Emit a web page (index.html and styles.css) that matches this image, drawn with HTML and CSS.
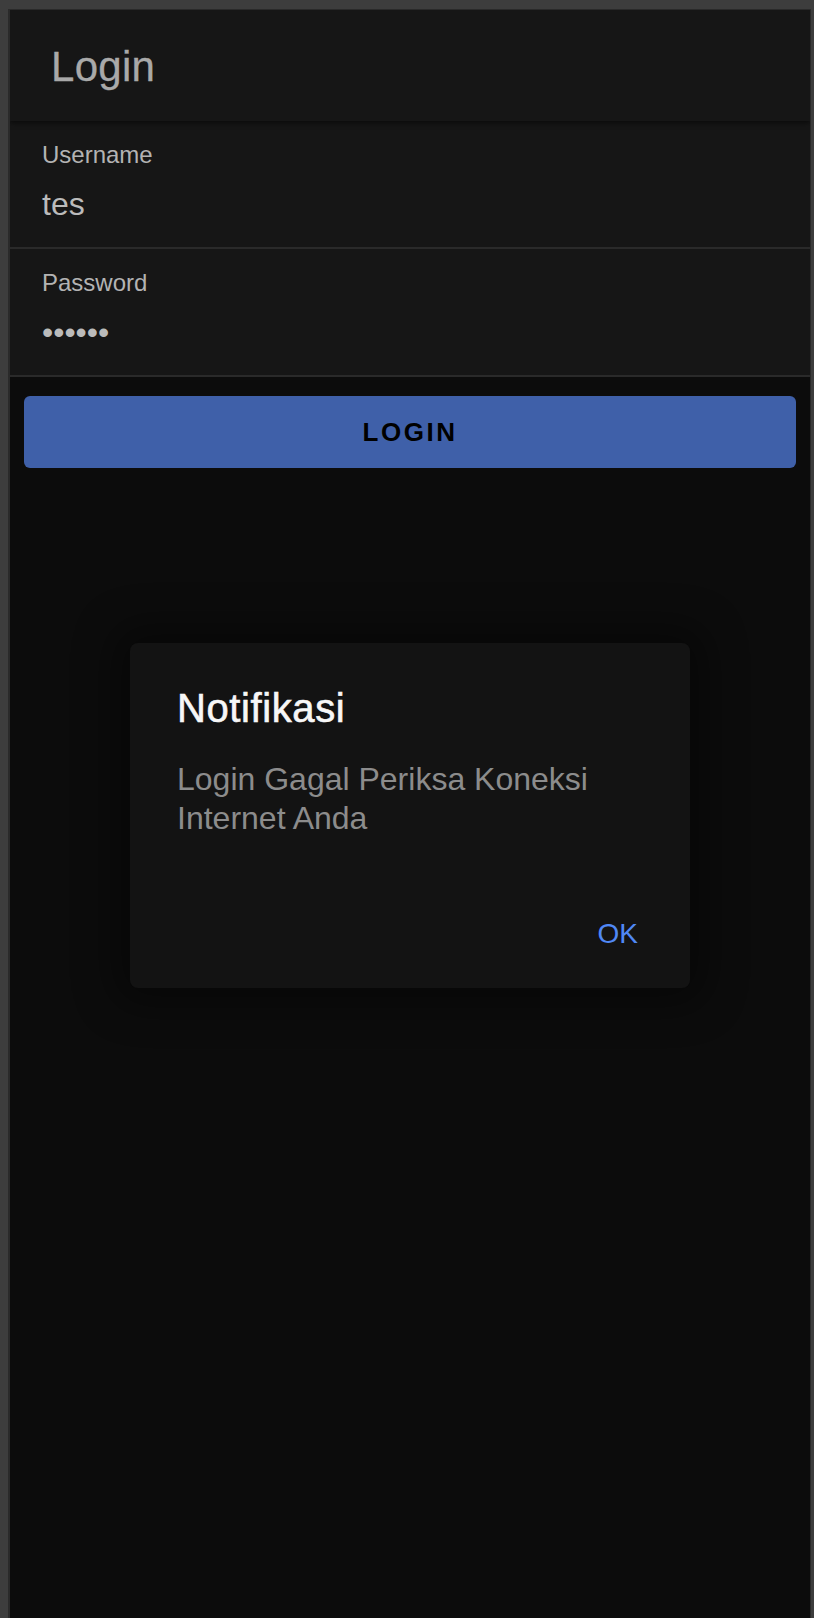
FILE: index.html
```html
<!DOCTYPE html>
<html lang="id">
<head>
<meta charset="utf-8">
<title>Login</title>
<link rel="stylesheet" href="styles.css">
</head>
<body>
<div class="app">
  <header class="toolbar">
    <h1 class="toolbar-title">Login</h1>
  </header>
  <main class="content">
    <div class="field">
      <div class="field-label">Username</div>
      <div class="field-value">tes</div>
    </div>
    <div class="field">
      <div class="field-label">Password</div>
      <div class="field-value">••••••</div>
    </div>
    <button class="btn-login" type="button">LOGIN</button>
  </main>
  <div class="overlay">
    <div class="dialog">
      <h2 class="dialog-title">Notifikasi</h2>
      <p class="dialog-message">Login Gagal Periksa Koneksi Internet Anda</p>
      <div class="dialog-actions">
        <button class="dialog-btn" type="button">OK</button>
      </div>
    </div>
  </div>
</div>
</body>
</html>
```

FILE: styles.css
```css
* { box-sizing: border-box; }

html, body {
  margin: 0;
  height: 100%;
}

body {
  background: #3d3d3d;
  padding: 9px 3px 0 8px;
  font-family: "Liberation Sans", Arial, sans-serif;
}

.app {
  position: relative;
  height: calc(100vh - 9px);
  background: #0c0c0c;
  border-top: 1px solid #2a2a2a;
  border-left: 2px solid #2a2a2a;
  border-right: 1px solid #2a2a2a;
  overflow: hidden;
  display: flex;
  flex-direction: column;
}

.toolbar {
  position: relative;
  z-index: 2;
  height: 111px;
  background: #161616;
  display: flex;
  align-items: center;
  padding-left: 41px;
  box-shadow: 0 2px 5px rgba(0, 0, 0, 0.55);
}

.toolbar-title {
  margin: 0;
  font-size: 42px;
  font-weight: 400;
  letter-spacing: 0.3px;
  -webkit-text-stroke: 0.3px #a9a9a9;
  color: #a9a9a9;
  line-height: 1;
  padding-top: 3px;
}

.content {
  display: flex;
  flex-direction: column;
}

.field {
  background: #161616;
  padding: 20px 31px 23px 32px;
  border-bottom: 2px solid #2a2a2a;
  height: 128px;
}

.field-label {
  font-size: 24px;
  line-height: 28px;
  color: #b3b3b3;
}

.field-value {
  margin-top: 15px;
  font-size: 32px;
  line-height: 40px;
  color: #bbbbbb;
}

.btn-login {
  margin: 19px 14px 0;
  height: 72px;
  border: none;
  border-radius: 6px;
  background: #3f60a9;
  color: #000;
  font-family: "Liberation Sans", Arial, sans-serif;
  font-size: 26px;
  font-weight: 700;
  letter-spacing: 2.5px;
  padding: 0;
}

.overlay {
  position: absolute;
  inset: 0;
  z-index: 5;
  display: flex;
  align-items: center;
  justify-content: center;
  padding-top: 2px;
}

.dialog {
  width: 560px;
  height: 345px;
  background: #131313;
  border-radius: 8px;
  padding: 42px 50px 0 47px;
  box-shadow: 0 0 40px 16px rgba(0, 0, 0, 0.4);
  display: flex;
  flex-direction: column;
}

.dialog-title {
  margin: 0;
  font-size: 40px;
  line-height: 46px;
  font-weight: 400;
  letter-spacing: 0.6px;
  -webkit-text-stroke: 0.6px #f7f7f7;
  color: #f7f7f7;
}

.dialog-message {
  margin: 29px 0 0;
  font-size: 32px;
  line-height: 39px;
  color: #8c8c8c;
}

.dialog-actions {
  display: flex;
  justify-content: flex-end;
  margin-top: 80px;
  padding-right: 2px;
}

.dialog-btn {
  background: none;
  border: none;
  padding: 0;
  font-family: "Liberation Sans", Arial, sans-serif;
  font-size: 28px;
  line-height: 32px;
  color: #5088f5;
}
```
